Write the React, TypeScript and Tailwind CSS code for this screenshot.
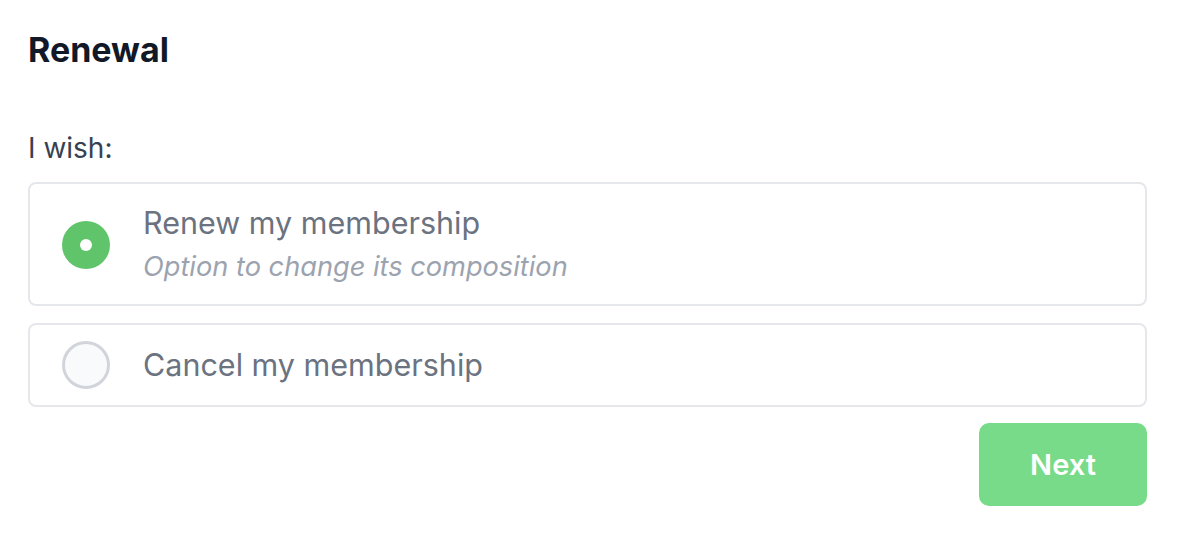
import React from "react";

export default function App() {
  return (
    <div className="w-[1190px] h-[542px] bg-white px-[28px] pt-[26px] text-[#374151]" style={{ fontFamily: "Inter, 'Noto Sans', sans-serif" }}>
      <h1 className="text-[34px] leading-[48px] font-bold text-[#111827]">Renewal</h1>
      <div className="mt-[54px] text-[28px] leading-[40px] text-[#374151]">I wish:</div>
      <div className="mt-[14px] flex flex-col gap-[17px] w-[1119px]">
        <div className="flex items-center gap-[33px] border-2 border-[#e5e7eb] rounded-[8px] px-[32px] pt-[17px] pb-[16px]">
          <div className="w-[48px] h-[48px] rounded-full bg-[#5fc46a] flex items-center justify-center shrink-0">
            <div className="w-[12px] h-[12px] rounded-full bg-white" />
          </div>
          <div className="flex flex-col">
            <span className="text-[30.5px] leading-[44px] text-[#6b7280]">Renew my membership</span>
            <span className="text-[27.2px] leading-[43px] italic text-[#9ca3af]">Option to change its composition</span>
          </div>
        </div>
        <div className="flex items-center gap-[33px] border-2 border-[#e5e7eb] rounded-[8px] px-[32px] py-[16px]">
          <div className="w-[48px] h-[48px] rounded-full bg-[#f9fafb] border-[3px] border-[#d1d5db] shrink-0" />
          <span className="text-[30.5px] leading-[44px] text-[#6b7280]">Cancel my membership</span>
        </div>
      </div>
      <div className="w-[1119px] flex justify-end mt-[16px]">
        <button className="w-[168px] h-[83px] rounded-[10px] bg-[#78db89] text-white text-[29px] font-semibold">Next</button>
      </div>
    </div>
  );
}
